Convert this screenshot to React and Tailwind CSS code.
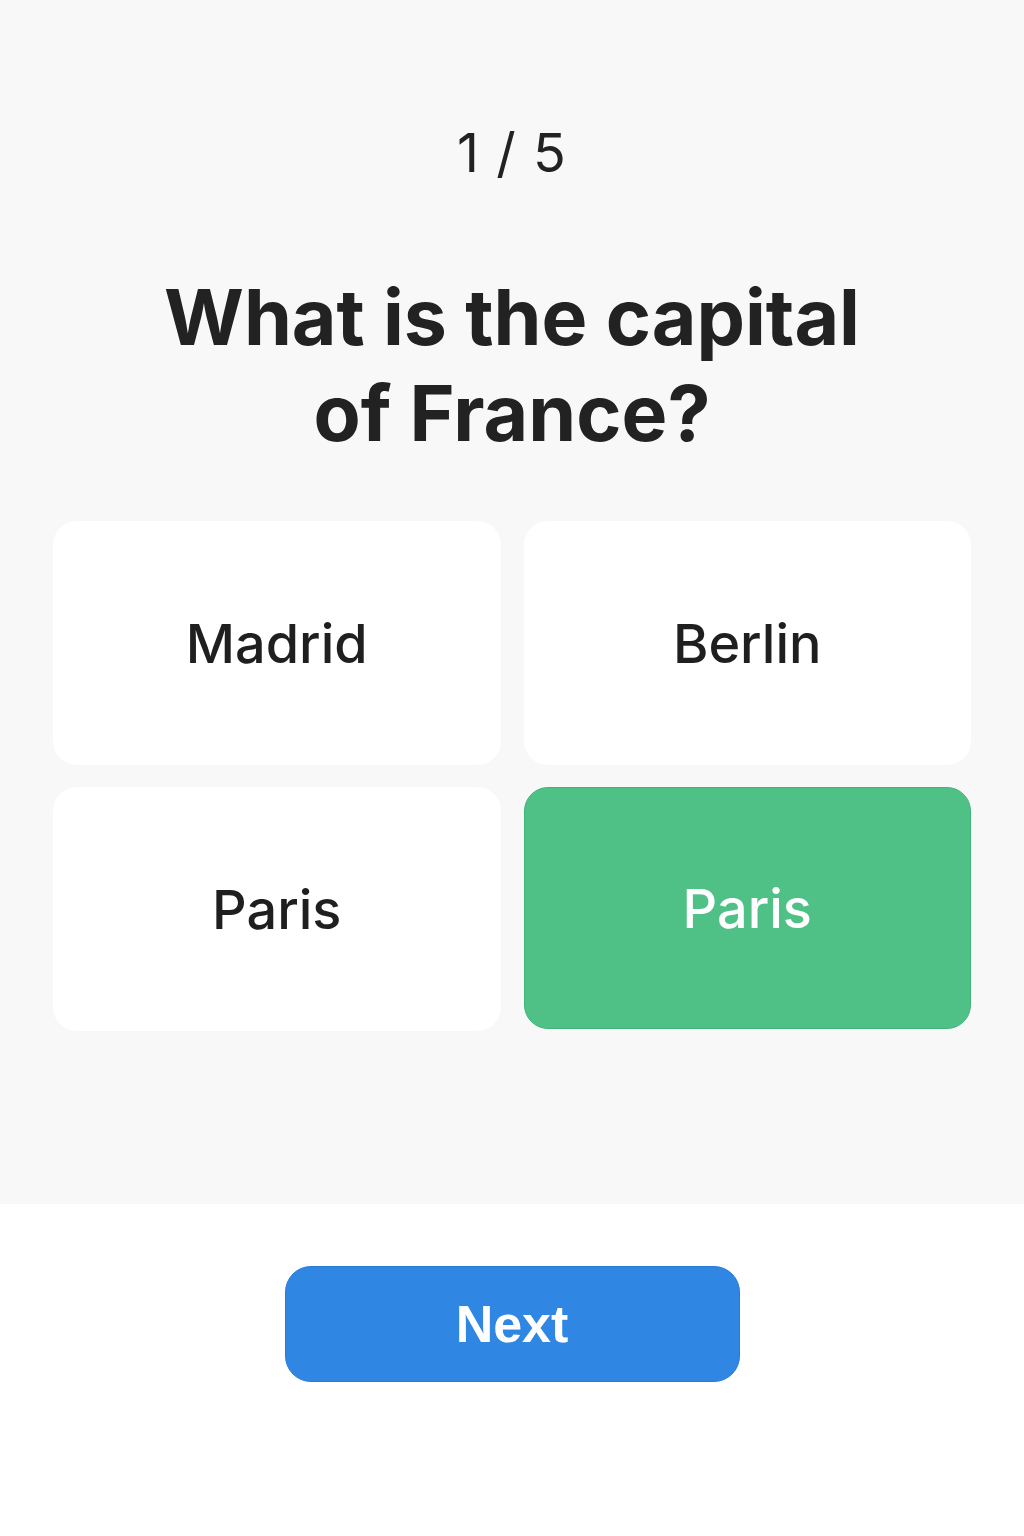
import React, { useState } from "react";

const options = [
  { id: 1, label: "Madrid" },
  { id: 2, label: "Berlin" },
  { id: 3, label: "Paris" },
  { id: 4, label: "Paris", correct: true },
];

export default function App() {
  const [selected, setSelected] = useState(4);

  return (
    <div className="min-h-screen bg-white font-['Inter','Liberation_Sans',sans-serif] text-[#222222]">
      {/* Question area */}
      <div className="h-[1204px] bg-[#f8f8f8] flex flex-col items-center">
        <p className="mt-[118px] text-[54px] leading-[70px] tracking-[0.02em]">1 / 5</p>

        <h1 className="mt-[81px] w-[760px] text-center text-[77px] leading-[96px] font-bold">
          What is the capital of France?
        </h1>

        <div className="mt-[60px] w-full px-[53px] grid grid-cols-2 gap-x-[23px] gap-y-[22px]">
          {options.map((opt) => (
            <button
              key={opt.id}
              onClick={() => setSelected(opt.id)}
              className={
                selected === opt.id && opt.correct
                  ? "h-[242px] rounded-[24px] bg-[#4fc187] border border-[#3fb57a] text-white text-[54px] font-medium"
                  : "h-[244px] rounded-[24px] bg-white text-[#1f1f1f] text-[54px] font-medium"
              }
            >
              {opt.label}
            </button>
          ))}
        </div>
      </div>

      {/* Footer */}
      <div className="flex justify-center pt-[62px] pb-[155px]">
        <button className="w-[455px] h-[116px] rounded-[26px] bg-[#2f86e3] border border-[#2a7ada] text-white text-[52px] font-bold font-['Liberation_Sans',sans-serif]">
          Next
        </button>
      </div>
    </div>
  );
}
